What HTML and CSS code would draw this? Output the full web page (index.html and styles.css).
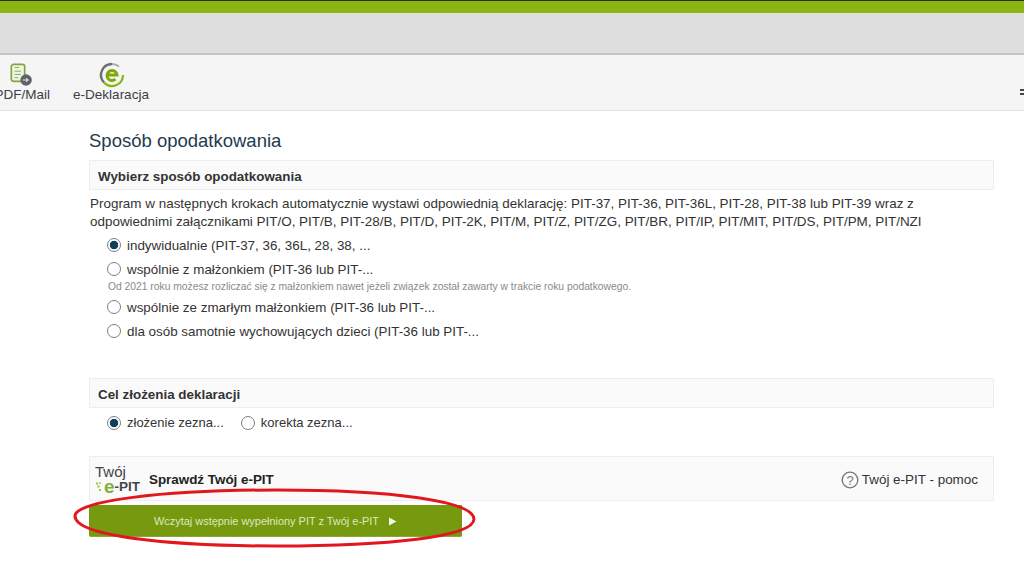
FILE: index.html
```html
<!DOCTYPE html>
<html lang="pl">
<head>
<meta charset="utf-8">
<title>Sposób opodatkowania</title>
<link rel="stylesheet" href="styles.css">
</head>
<body>
<div class="page">
  <div class="topbar"></div>
  <div class="greybar"></div>
  <div class="toolbar">
    <div class="tool tool-pdf">
      <svg class="tool-icon" width="24" height="24" viewBox="0 0 26 26">
        <path d="M5 2.500h9.500a2.500 2.500 0 0 1 2.500 2.500v13.500a2.500 2.500 0 0 1-2.500 2.500H5a2.500 2.500 0 0 1-2.500-2.500V5A2.500 2.500 0 0 1 5 2.500z" fill="#eef4e2" stroke="#7fa63c" stroke-width="1.800"/>
        <path d="M6 6h5M6 10h7M6 13.500h7M6 17h4" stroke="#8aa85a" stroke-width="1"/>
        <circle cx="18.500" cy="19.500" r="6.200" fill="#5f6368"/>
        <path d="M15 19.500h5.500M18.500 17.800l2.200 1.700-2.200 1.700" fill="none" stroke="#e8e8e8" stroke-width="1.100"/>
      </svg>
      <span>PDF/Mail</span>
    </div>
    <div class="tool tool-edek">
      <svg class="tool-icon" width="26" height="26" viewBox="0 0 26 26">
        <path d="M13 2a11 11 0 0 0-8 18.500" fill="none" stroke="#6d6f71" stroke-width="2.400"/>
        <path d="M5 20.500A11 11 0 0 0 24 13" fill="none" stroke="#8ab510" stroke-width="2.200"/>
        <path d="M13 2a11 11 0 0 1 7 2.600" fill="none" stroke="#a8a8a8" stroke-width="2"/>
        <path d="M8.500 13h9.500a5 5 0 1 0-1.600 4.200" fill="none" stroke="#7fa80c" stroke-width="3"/>
      </svg>
      <span>e-Deklaracja</span>
    </div>
    <div class="tool-menu"><i></i><i></i></div>
  </div>

  <main class="content">
    <h1 class="title">Sposób opodatkowania</h1>

    <div class="section-head">Wybierz sposób opodatkowania</div>
    <p class="intro">Program w następnych krokach automatycznie wystawi odpowiednią deklarację: PIT-37, PIT-36, PIT-36L, PIT-28, PIT-38 lub PIT-39 wraz z<br>odpowiednimi załącznikami PIT/O, PIT/B, PIT-28/B, PIT/D, PIT-2K, PIT/M, PIT/Z, PIT/ZG, PIT/BR, PIT/IP, PIT/MIT, PIT/DS, PIT/PM, PIT/NZI</p>

    <div class="options">
      <div class="option"><span class="radio checked"></span>indywidualnie (PIT-37, 36, 36L, 28, 38, ...</div>
      <div class="option"><span class="radio"></span>wspólnie z małżonkiem (PIT-36 lub PIT-...</div>
      <div class="note">Od 2021 roku możesz rozliczać się z małżonkiem nawet jeżeli związek został zawarty w trakcie roku podatkowego.</div>
      <div class="option"><span class="radio"></span>wspólnie ze zmarłym małżonkiem (PIT-36 lub PIT-...</div>
      <div class="option"><span class="radio"></span>dla osób samotnie wychowujących dzieci (PIT-36 lub PIT-...</div>
    </div>

    <div class="section-head section-cel">Cel złożenia deklaracji</div>
    <div class="inline-options">
      <div class="option"><span class="radio checked"></span>złożenie zezna...</div>
      <div class="option"><span class="radio"></span>korekta zezna...</div>
    </div>

    <div class="epit">
      <div class="epit-logo">
        <span class="epit-twoj">Twój</span>
        <span class="epit-mark"><svg class="epit-dots" width="9" height="11" viewBox="0 0 9 11"><circle cx="2" cy="2.500" r="1.200" fill="#a5c95a"/><circle cx="5" cy="2" r="1" fill="#a5c95a"/><circle cx="3.500" cy="5.500" r="1.200" fill="#a5c95a"/><circle cx="5" cy="9" r="1.200" fill="#a5c95a"/></svg><b class="epit-e">e</b>-PIT</span>
      </div>
      <div class="epit-title">Sprawdź Twój e-PIT</div>
      <div class="epit-help">
        <svg width="18" height="18" viewBox="0 0 18 18"><circle cx="9" cy="9" r="7.800" fill="none" stroke="#777" stroke-width="1.300"/><text x="9" y="13.500" text-anchor="middle" class="help-q">?</text></svg>
        <span>Twój e-PIT - pomoc</span>
      </div>
    </div>
    <div class="load-btn">Wczytaj wstępnie wypełniony PIT z Twój e-PIT<svg class="play" width="9" height="9" viewBox="0 0 9 9"><path d="M1 0.500 8.500 4.500 1 8.500z" fill="#f3f6e8"/></svg></div>
  </main>

  <svg class="ring" width="410" height="62" viewBox="0 0 410 62">
    <path d="M205 3C320 3 401 14 402 32C402 50 315 59 205 59C95 59 3 49 3 29C3 14 90 3 205 3Z" fill="none" stroke="#e2161f" stroke-width="3"/>
  </svg>
</div>
</body>
</html>
```
FILE: styles.css
```css
* { box-sizing: border-box; }
html, body { margin: 0; padding: 0; }
body { background: #fff; font-family: "Liberation Sans", Arial, sans-serif; color: #333; }
.page { position: relative; width: 1024px; height: 565px; overflow: hidden; }
.topbar { height: 13px; background: #8ab512; border-top: 1px solid #2c3406; }
.greybar { height: 42px; background: #dedede; border-bottom: 2px solid #c4c4c4; }
.toolbar { height: 56px; background: #f5f5f5; border-bottom: 1px solid #e2e2e2; display: flex; position: relative; }
.tool { display: flex; flex-direction: column; align-items: center; font-size: 13.500px; color: #3a4048; padding-top: 7px; white-space: nowrap; }
.tool span { line-height: 15px; }
.tool-icon { display: block; }
.tool-pdf { width: 50px; align-items: flex-end; }
.tool-pdf .tool-icon { margin: 0 17px 1px 0; }
.tool-edek { margin-left: 23px; width: 76px; }
.tool-edek .tool-icon { margin: 0 0 -1px 2px; }
.tool-menu { position: absolute; right: 0; top: 34px; width: 4px; display: flex; flex-direction: column; gap: 2px; }
.tool-menu i { display: block; height: 2px; background: #444; }
.content { width: 905px; margin-left: 89px; display: flex; flex-direction: column; }
.title { margin: 19px 0 0; font-size: 18.500px; font-weight: 400; color: #1f3a4d; line-height: 21px; }
.section-head { height: 30px; margin-top: 9px; background: #fafafa; border: 1px solid #eee; padding: 1px 0 0 8px; line-height: 30px; font-size: 13.400px; font-weight: 700; color: #333; }
.intro { margin: 5px 0 0 1px; font-size: 13.450px; line-height: 18px; color: #333; white-space: nowrap; }
.options { margin-top: 2px; padding-left: 18px; }
.option { display: flex; align-items: center; font-size: 13.400px; color: #333; height: 24px; white-space: nowrap; }
.radio { width: 14px; height: 14px; border-radius: 50%; border: 1.500px solid #7d7d7d; background: #fff; margin-right: 6px; flex: none; }
.radio.checked { background: radial-gradient(circle, #123f5c 0 3.800px, #fff 4.600px); }
.note { font-size: 10.300px; color: #8a8a8a; line-height: 11px; margin: 0 0 3px 1px; white-space: nowrap; }
.section-cel { margin-top: 35px; }
.inline-options { display: flex; gap: 17px; padding-left: 18px; margin-top: 2px; }
.inline-options .option { height: 25px; font-size: 13px; }
.epit { height: 45px; margin-top: 21px; background: #fafafa; border: 1px solid #eee; display: flex; align-items: center; position: relative; }
.epit-logo { width: 55px; padding-left: 5px; display: flex; flex-direction: column; color: #444; }
.epit-twoj { font-size: 15px; line-height: 15px; }
.epit-mark { display: flex; align-items: center; font-size: 13.500px; line-height: 15px; font-weight: 700; }
.epit-dots { flex: none; }
.epit-e { color: #7fb23a; font-size: 19px; line-height: 15px; }
.epit-title { margin-left: 4px; margin-top: 2px; font-size: 13.400px; font-weight: 700; color: #222; }
.epit-help { margin-left: auto; margin-right: 15px; margin-top: 2px; display: flex; align-items: center; gap: 3px; font-size: 13.450px; color: #333; white-space: nowrap; }
.help-q { font-family: "Liberation Sans", Arial, sans-serif; font-size: 13px; fill: #777; }
.load-btn { height: 32px; margin-top: 4px; width: 373px; background: #76990f; border-bottom: 1px solid #8aa53a; border-radius: 0 0 2px 2px; color: #dfe8c0; font-size: 10.950px; display: flex; align-items: center; justify-content: center; white-space: nowrap; }
.play { margin-left: 9px; margin-top: 1px; }
.ring { position: absolute; left: 72px; top: 487px; }
```
